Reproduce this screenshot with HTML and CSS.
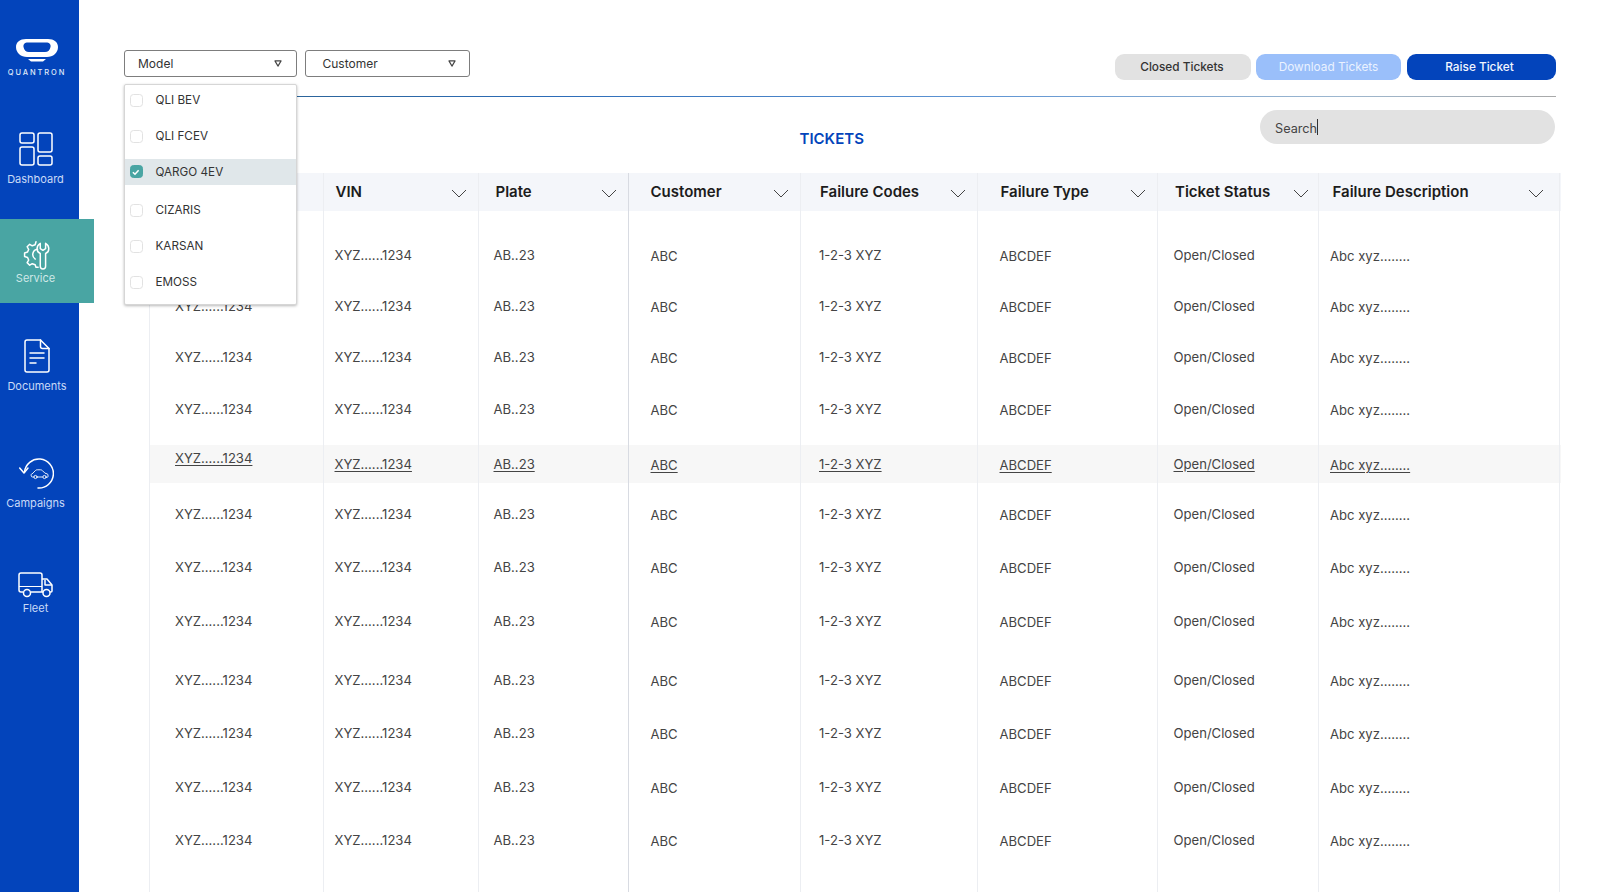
FILE: index.html
```html
<!DOCTYPE html>
<html lang="en">
<head>
<meta charset="utf-8">
<title>Tickets</title>
<link rel="stylesheet" href="styles.css">
</head>
<body>
<aside class="sidebar">
  <div class="logo">
    <svg class="logo-mark" viewBox="0 0 42 23" width="42" height="23">
      <path fill="#fff" fill-rule="evenodd" d="M10 0H32C38 0 42 3 42 8C42 14 37 18 31 18H11C5 18 0 14 0 8C0 3 4 0 10 0ZM12 3.500H30C33.500 3.500 35 5.500 34.500 8C34 11 32 13 29 13H13C10 13 8 11 7.500 8C7 5.500 8.500 3.500 12 3.500Z"/>
      <path d="M12 20H30L27 22.500H15Z" fill="#fff"/>
    </svg>
    <span class="logo-text">QUANTRON</span>
  </div>
  <nav class="nav">
    <a class="nav-item nav-dashboard">
      <svg viewBox="0 0 34 34" width="34" height="34" fill="none" stroke="#fff" stroke-width="1.500"><rect x="1" y="1" width="14" height="10" rx="2"/><rect x="19" y="1" width="14" height="19" rx="2"/><rect x="1" y="15" width="14" height="18" rx="2"/><rect x="19" y="24" width="14" height="9" rx="2"/></svg>
      <span>Dashboard</span>
    </a>
    <a class="nav-item nav-service">
      <svg viewBox="0 0 30 30" width="32" height="32" fill="none" stroke="#fff" stroke-width="1.400" stroke-linejoin="round" stroke-linecap="round"><path d="M15 3.500l-.8 2.800-2.700 1-2.400-1.400-2.400 2.300 1.400 2.500-1 2.500-2.800.8v3.400l2.800.8 1 2.500-1.400 2.400 2.400 2.400 2.400-1.400 2.700 1 .8 2.400h2"/><path d="M16.500 10.500a5 5 0 0 0-2.200 9.200"/><path d="M21.500 29c-1.500 0-2.500-1-2.500-2.500V14.500c-2-.8-3-2.500-3-4.500 0-2.500 1.300-4 3-5v5l2.500 1.500L24 10V5c1.700 1 3 2.500 3 5 0 2-1 3.700-3 4.500v12c0 1.500-1 2.500-2.500 2.500z"/></svg>
      <span>Service</span>
    </a>
    <a class="nav-item nav-documents">
      <svg viewBox="0 0 26 34" width="26" height="34" fill="none" stroke="#fff" stroke-width="1.500" stroke-linejoin="round" stroke-linecap="round"><path d="M3 1h13.500L25 9.500V31a2 2 0 0 1-2 2H3a2 2 0 0 1-2-2V3a2 2 0 0 1 2-2z"/><path d="M16.500 1v6.500a2 2 0 0 0 2 2H25"/><path d="M6 14h14M6 19h14M6 24h6"/></svg>
      <span>Documents</span>
    </a>
    <a class="nav-item nav-campaigns">
      <svg viewBox="0 0 36 32" width="36" height="32" fill="none" stroke="#fff" stroke-width="1.500" stroke-linecap="round" stroke-linejoin="round"><path d="M6.500 14A14.500 14.500 0 1 1 20 30"/><path d="M1.700 10L6 15l4-5"/><path d="M14.500 15.500l3-3c.5-.5 1-.7 1.700-.7h3.300c.8 0 1.400.3 2 .9l2.500 2.500 2 .6c.7.2 1 .6 1 1.300v1.400c0 .5-.3.800-.8.800h-1M19 19h5.500M16 19h-1.500c-.8 0-1.300-.5-1.300-1.200v-1c0-.7.500-1.100 1.300-1.300" stroke-width=".9"/><circle cx="17.500" cy="19" r="1.600" stroke-width=".9"/><circle cx="26.500" cy="19" r="1.600" stroke-width=".9"/></svg>
      <span>Campaigns</span>
    </a>
    <a class="nav-item nav-fleet">
      <svg viewBox="0 0 36 26" width="36" height="26" fill="none" stroke="#fff" stroke-width="1.500" stroke-linejoin="round"><path d="M5 20H3a2 2 0 0 1-2-2V3a2 2 0 0 1 2-2h19a2 2 0 0 1 2 2v17H13"/><path d="M24 7h5l5 6v6a1 1 0 0 1-1 1h-1M24 20h1"/><path d="M27 8v5h7"/><path d="M1 14.500h23" stroke-width="1"/><circle cx="9" cy="21" r="3.500"/><circle cx="28.500" cy="21" r="3.500"/></svg>
      <span>Fleet</span>
    </a>
  </nav>
</aside>

<main class="main">
  <header class="toolbar">
    <div class="filters">
      <div class="select select-model">
        <span>Model</span><svg class="tri" viewBox="0 0 9 8" width="8" height="7"><path d="M1 1h7L4.500 7z" fill="#fff" stroke="#444" stroke-width="1.300" stroke-linejoin="round"/></svg>
        <ul class="menu">
          <li><b class="check"></b>QLI BEV</li>
          <li><b class="check"></b>QLI FCEV</li>
          <li class="on"><b class="check"><svg viewBox="0 0 12 12" width="12" height="12" fill="none" stroke="#fff" stroke-width="1.600"><path d="M3 6.200l2.200 2.100L9 4.200"/></svg></b>QARGO 4EV</li>
          <li><b class="check"></b>CIZARIS</li>
          <li><b class="check"></b>KARSAN</li>
          <li><b class="check"></b>EMOSS</li>
        </ul>
      </div>
      <div class="select select-customer"><span>Customer</span><svg class="tri" viewBox="0 0 9 8" width="8" height="7"><path d="M1 1h7L4.500 7z" fill="#fff" stroke="#444" stroke-width="1.300" stroke-linejoin="round"/></svg></div>
    </div>
    <div class="actions">
      <button class="btn btn-grey">Closed Tickets</button>
      <button class="btn btn-light">Download Tickets</button>
      <button class="btn btn-blue">Raise Ticket</button>
    </div>
  </header>
  <div class="rule"></div>
  <div class="title-row">
    <h1 class="title">TICKETS</h1>
    <div class="search"><span>Search</span><i class="caret"></i></div>
  </div>

  <section class="table">
    <div class="row head">
      <div></div>
      <div>VIN<svg class="chev" viewBox="0 0 16 9" fill="none" stroke="#444" width="16" height="9"><path d="M1 1l7 7 7-7"/></svg></div>
      <div>Plate<svg class="chev" viewBox="0 0 16 9" fill="none" stroke="#444" width="16" height="9"><path d="M1 1l7 7 7-7"/></svg></div>
      <div>Customer<svg class="chev" viewBox="0 0 16 9" fill="none" stroke="#444" width="16" height="9"><path d="M1 1l7 7 7-7"/></svg></div>
      <div>Failure Codes<svg class="chev" viewBox="0 0 16 9" fill="none" stroke="#444" width="16" height="9"><path d="M1 1l7 7 7-7"/></svg></div>
      <div>Failure Type<svg class="chev" viewBox="0 0 16 9" fill="none" stroke="#444" width="16" height="9"><path d="M1 1l7 7 7-7"/></svg></div>
      <div>Ticket Status<svg class="chev" viewBox="0 0 16 9" fill="none" stroke="#444" width="16" height="9"><path d="M1 1l7 7 7-7"/></svg></div>
      <div>Failure Description<svg class="chev" viewBox="0 0 16 9" fill="none" stroke="#444" width="16" height="9"><path d="M1 1l7 7 7-7"/></svg></div>
    </div>
    <div class="row gap"><div></div><div></div><div></div><div></div><div></div><div></div><div></div><div></div></div>
    <div class="row r1"><div></div><div>XYZ......1234</div><div>AB..23</div><div>ABC</div><div>1-2-3 XYZ</div><div>ABCDEF</div><div>Open/Closed</div><div>Abc xyz........</div></div>
    <div class="row r2"><div>XYZ......1234</div><div>XYZ......1234</div><div>AB..23</div><div>ABC</div><div>1-2-3 XYZ</div><div>ABCDEF</div><div>Open/Closed</div><div>Abc xyz........</div></div>
    <div class="row r3"><div>XYZ......1234</div><div>XYZ......1234</div><div>AB..23</div><div>ABC</div><div>1-2-3 XYZ</div><div>ABCDEF</div><div>Open/Closed</div><div>Abc xyz........</div></div>
    <div class="row r4"><div>XYZ......1234</div><div>XYZ......1234</div><div>AB..23</div><div>ABC</div><div>1-2-3 XYZ</div><div>ABCDEF</div><div>Open/Closed</div><div>Abc xyz........</div></div>
    <div class="row r5 hover"><div>XYZ......1234</div><div>XYZ......1234</div><div>AB..23</div><div>ABC</div><div>1-2-3 XYZ</div><div>ABCDEF</div><div>Open/Closed</div><div>Abc xyz........</div></div>
    <div class="row r6"><div>XYZ......1234</div><div>XYZ......1234</div><div>AB..23</div><div>ABC</div><div>1-2-3 XYZ</div><div>ABCDEF</div><div>Open/Closed</div><div>Abc xyz........</div></div>
    <div class="row r7"><div>XYZ......1234</div><div>XYZ......1234</div><div>AB..23</div><div>ABC</div><div>1-2-3 XYZ</div><div>ABCDEF</div><div>Open/Closed</div><div>Abc xyz........</div></div>
    <div class="row r8"><div>XYZ......1234</div><div>XYZ......1234</div><div>AB..23</div><div>ABC</div><div>1-2-3 XYZ</div><div>ABCDEF</div><div>Open/Closed</div><div>Abc xyz........</div></div>
    <div class="row r9"><div>XYZ......1234</div><div>XYZ......1234</div><div>AB..23</div><div>ABC</div><div>1-2-3 XYZ</div><div>ABCDEF</div><div>Open/Closed</div><div>Abc xyz........</div></div>
    <div class="row r10"><div>XYZ......1234</div><div>XYZ......1234</div><div>AB..23</div><div>ABC</div><div>1-2-3 XYZ</div><div>ABCDEF</div><div>Open/Closed</div><div>Abc xyz........</div></div>
    <div class="row r11"><div>XYZ......1234</div><div>XYZ......1234</div><div>AB..23</div><div>ABC</div><div>1-2-3 XYZ</div><div>ABCDEF</div><div>Open/Closed</div><div>Abc xyz........</div></div>
    <div class="row r12"><div>XYZ......1234</div><div>XYZ......1234</div><div>AB..23</div><div>ABC</div><div>1-2-3 XYZ</div><div>ABCDEF</div><div>Open/Closed</div><div>Abc xyz........</div></div>
  </section>
</main>
</body>
</html>
```

FILE: styles.css
```css
* { box-sizing: border-box; }
html, body { margin: 0; height: 892px; overflow: hidden; }
body { display: flex; background: #fff; font-family: Inter, "Liberation Sans", sans-serif; color: #333; }

/* Sidebar */
.sidebar { flex: 0 0 79px; width: 79px; background: #0344bb; position: relative; z-index: 2; padding-top: 39px; }
.logo { display: flex; flex-direction: column; align-items: center; width: 74px; }
.logo-mark { display: block; }
.logo-text { margin-top: 6px; font-size: 7.500px; line-height: 10px; letter-spacing: 1.900px; font-weight: 500; color: #dfe8f8; white-space: nowrap; }
.nav { display: flex; flex-direction: column; }
.nav-item { display: flex; flex-direction: column; align-items: center; width: 71px; color: #c9daf7; font-size: 11px; line-height: 14px; }
.nav-item svg { display: block; }
.nav-dashboard { margin-top: 54px; }
.nav-dashboard span { margin-top: 6px; }
.nav-service { margin-top: 33px; width: 94px; height: 84px; padding: 19px 23px 0 0; background: #49a5a3; color: #cfe8e7; }
.nav-service span { margin-top: 1px; }
.nav-documents { margin-top: 36px; width: 74px; }
.nav-documents span { margin-top: 6px; }
.nav-campaigns { margin-top: 65px; }
.nav-campaigns span { margin-top: 6px; }
.nav-fleet { margin-top: 62px; }
.nav-fleet span { margin-top: 3px; }

/* Main */
.main { flex: 1; min-width: 0; padding: 50px 44px 0 44.500px; }
.toolbar { display: flex; justify-content: space-between; height: 46px; }
.filters { display: flex; gap: 8px; height: 27px; }
.select { position: relative; display: flex; align-items: center; justify-content: space-between; height: 27px; border: 1px solid #7d7d7d; border-radius: 3px; background: #fff; font-size: 12px; color: #333; }
.select-model { width: 173px; padding: 0 14px 0 13.500px; }
.select-customer { width: 165px; padding: 0 13px 0 17px; }
.tri { display: block; flex: none; }
.menu { position: absolute; left: -1px; top: 33px; z-index: 3; width: 173px; height: 221px; margin: 0; padding: 0; list-style: none; background: #fff; border: 1px solid #d6d6d6; border-radius: 2px; box-shadow: 0 1px 3px rgba(0,0,0,.28); font-size: 11.700px; color: #333; }
.menu li { display: flex; align-items: center; height: 26px; padding-left: 5px; margin-bottom: 10px; }
.menu li:nth-child(1) { margin-top: 2px; }
.menu li:nth-child(3) { margin-bottom: 12px; padding-bottom: 1px; background: #e0e7ea; }
.check { display: flex; flex: 0 0 13px; width: 13px; height: 13px; margin-right: 13px; border: 1px solid #e2e2e2; border-radius: 3.500px; background: #fff; }
.on .check { border-color: #49a5a3; background: #49a5a3; }
.check svg { display: block; margin: 0 0 0 -.5px; }

.actions { display: flex; gap: 5px; height: 26px; margin-top: 4px; }
.btn { height: 26px; border: 0; border-radius: 9px; font: 500 11.800px/26px Inter, "Liberation Sans", sans-serif; padding: 0; }
.btn-grey { width: 136px; padding-right: 2px; background: #e2e2e2; color: #333; }
.btn-light { width: 145px; background: #9abffa; color: #eaf2ff; font-weight: 400; }
.btn-blue { width: 149px; padding-right: 4px; background: #0344bb; color: #f2f6ff; margin-left: 1px; }

.rule { height: 1px; background: linear-gradient(90deg,#2c5f86 0%,#2c6cb8 30%,#5f95d4 60%,#9db7cf 85%,#a9a9a9 100%); }

.title-row { display: flex; height: 34px; margin-top: 13px; margin-bottom: 29px; }
.title { flex: 1; margin: 0; padding: 18px 0 0 676px; font-size: 15px; line-height: 22px; font-weight: 600; color: #0344bb; }
.search { display: flex; align-items: center; width: 295px; height: 34px; margin-right: 1px; padding: 3px 0 0 15px; border-radius: 17px; background: #e2e2e2; font-size: 12.700px; color: #444; }
.caret { display: block; width: 1px; height: 16px; background: #333; margin-top: -3px; }

/* Table */
.table { width: 1412px; margin-left: 25.500px; }
.row { display: grid; grid-template-columns: 174.500px 155.500px 150px 172px 177px 180px 161px 241px; font-size: 13.100px; line-height: 20px; color: #444; }
.row > div { border-right: 1px solid #eceef2; white-space: nowrap; padding-top: 9px; }
.row > div:first-child { border-left: 1px solid #eceef2; padding-left: 25px; }
.row > div:nth-child(2) { padding-left: 11px; }
.row > div:nth-child(3) { padding-left: 14.500px; border-right-color: #d8dbe2; }
.row > div:nth-child(4) { padding-left: 21.500px; padding-top: 10px; }
.row > div:nth-child(5) { padding-left: 18px; }
.row > div:nth-child(6) { padding-left: 21.500px; padding-top: 10px; }
.row > div:nth-child(7) { padding-left: 15.500px; }
.row > div:nth-child(8) { padding-left: 11px; padding-top: 10px; }

.head { height: 38px; background: #f4f6fa; font-size: 15px; font-weight: 600; color: #1c1c1c; }
.head > div { position: relative; padding-top: 9px !important; }
.head > div:nth-child(2) { padding-left: 12px; }
.head > div:nth-child(3) { padding-left: 16.500px; }
.head > div:nth-child(5) { padding-left: 19px; }
.head > div:nth-child(6) { padding-left: 22.500px; }
.head > div:nth-child(7) { padding-left: 17px; }
.head > div:nth-child(8) { padding-left: 13.500px; }
.chev { position: absolute; right: 11px; top: 16px; }
.head > div:nth-child(7) .chev { right: 9px; }
.head > div:nth-child(8) .chev { right: 15px; }

.gap { height: 25px; }
.r1, .r2 { height: 51px; }
.r3 { height: 52px; }
.r4 { height: 55px; }
.r5 { height: 50px; }
.r6 { height: 53px; }
.r7 { height: 54px; }
.r8 { height: 59px; }
.r9 { height: 53px; }
.r10 { height: 54px; }
.r11 { height: 53px; }
.r12 { height: 71px; }

.hover { background: linear-gradient(#f7f7f7,#f7f7f7) top/100% 38px no-repeat; text-decoration: underline; text-underline-offset: 2px; }
.hover > div:first-child { margin-top: -5px; height: 55px; padding-top: 8px; }
```
